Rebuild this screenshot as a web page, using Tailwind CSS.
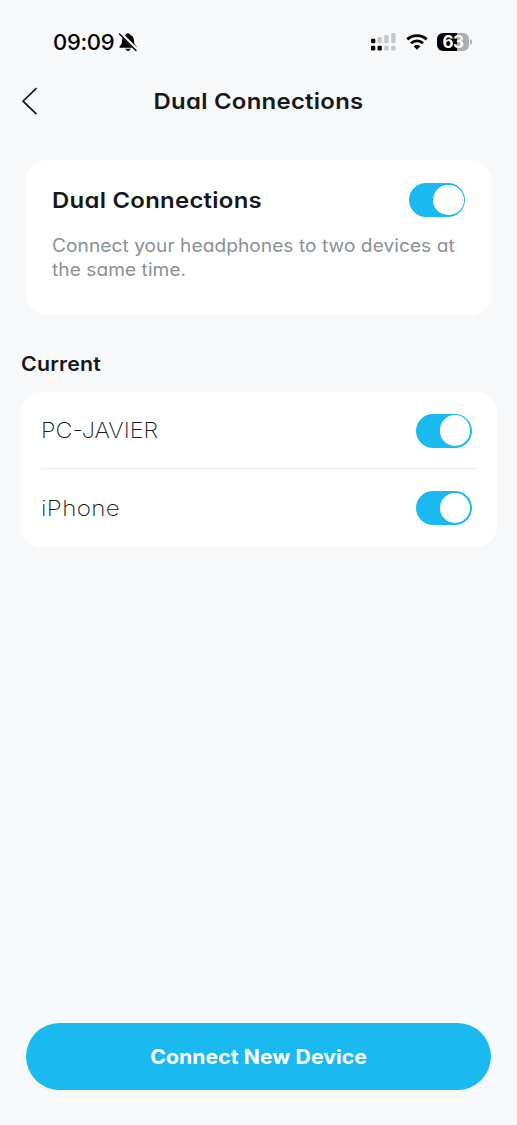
<!DOCTYPE html>
<html lang="en">
<head>
<meta charset="utf-8">
<meta name="viewport" content="width=device-width, initial-scale=1">
<title>Dual Connections</title>
<script src="https://cdn.jsdelivr.net/npm/@tailwindcss/browser@4"></script>
</head>
<body class="bg-[#f7f8fa] font-['Inter','Liberation_Sans',sans-serif] [font-feature-settings:'cv11'] text-[#16181a]">
<div class="flex h-[1125px] w-[517px] flex-col overflow-hidden whitespace-nowrap">

  <div class="flex h-[76px] shrink-0 items-center pt-2 pl-[53px] pr-[45px] text-black">
    <span class="text-[22px] font-medium leading-7 tracking-[-0.3px]">09:09</span>
    <svg class="ml-[4px] h-[20px] w-[20px]" viewBox="0 0 20 20">
      <path d="M10 1.2c-1.3 0-2.1.7-2.3 1.8C5.2 3.9 4 5.900 4 8.500c0 3.500-1.100 4.300-2.300 5.700-.6.8-.2 1.600.7 1.600h15.200c.9 0 1.300-.8.700-1.600C17.100 12.800 16 12 16 8.500c0-2.600-1.200-4.600-3.700-5.500C12.100 1.900 11.300 1.200 10 1.200zM7.500 16.800h5c-.2 1.300-1.200 2.200-2.500 2.200s-2.300-.9-2.500-2.200z"/>
      <path d="M2.200 1.200 19 18" stroke="#f7f8fa" stroke-width="3.600"/>
      <path d="M1.500 2 18 18.500" stroke="#000" stroke-width="1.400" stroke-linecap="round"/>
    </svg>
    <svg class="ml-auto h-[20px] w-[27px]" viewBox="0 0 27 20">
      <g fill="#c6c7c9"><rect x="7.500" y="5" width="4.300" height="6.300" rx="1.200"/><rect x="14.300" y="3" width="4.300" height="8.300" rx="1.200"/><rect x="21.200" y="1" width="4.300" height="10.300" rx="1.200"/><rect x="14.300" y="13.800" width="4.300" height="4.700" rx="1.200"/><rect x="21.200" y="13.800" width="4.300" height="4.700" rx="1.200"/></g>
      <rect x="1" y="6.800" width="4.300" height="4.500" rx="1.200"/><rect x="1" y="13.800" width="4.300" height="4.700" rx="1.200"/><rect x="7.500" y="13.800" width="4.300" height="4.700" rx="1.200"/>
    </svg>
    <svg class="ml-[9px] h-[16px] w-[22px]" viewBox="0 0 22 16" fill="none" stroke="#000" stroke-width="2.900">
      <path d="M1.300 5.400C6.700.4 15.300.4 20.700 5.400"/><path d="M5 9.200c3.400-3.100 8.600-3.100 12 0"/>
      <path fill="#000" stroke="none" d="M11 15.700 7.600 12.300c1.900-1.700 4.900-1.700 6.800 0z"/>
    </svg>
    <div class="ml-[9px] flex items-center">
      <div class="flex h-[18px] w-[32px] items-center justify-center rounded-[6px] bg-linear-to-r from-black from-63% to-[#acadaf] to-63% text-[17px] font-bold leading-none tracking-[-0.5px] text-white">63</div>
      <div class="ml-[1px] h-[6px] w-[2px] rounded-r-full bg-[#b4b5b7]"></div>
    </div>
  </div>

  <div class="grid h-[50px] shrink-0 grid-cols-[60px_1fr_60px] items-center">
    <svg class="ml-[21px] h-[28px] w-[18px]" viewBox="0 0 18 28" fill="none" stroke="#16181a" stroke-width="1.700"><path d="M15.500 1.200 2 14.200l13.500 13"/></svg>
    <h1 class="-mt-px scale-x-[1.087] text-center text-[22px] font-semibold leading-7 tracking-[0.25px]">Dual Connections</h1>
  </div>

  <section class="mx-[26px] mt-[34px] h-[155px] shrink-0 rounded-[21px] bg-white px-[26px] pt-[23px]">
    <div class="flex h-[34px] items-center justify-between">
      <h2 class="origin-left scale-x-[1.087] text-[22px] font-semibold leading-7 tracking-[0.25px]">Dual Connections</h2>
      <div class="flex h-[34px] w-[56px] items-center justify-end rounded-full bg-[#1abaf1] pr-[1.500px]"><div class="h-[30.500px] w-[30.500px] rounded-full bg-white"></div></div>
    </div>
    <p class="mt-[17px] origin-left scale-x-[1.062] text-[18px] leading-[24px] tracking-[0.050px] text-[#8a9195]">Connect your headphones to two devices at<br>the same time.</p>
  </section>

  <h3 class="mt-[35px] ml-[21px] h-[28px] shrink-0 origin-left scale-x-[1.065] text-[20px] font-semibold leading-7 tracking-[0.2px]">Current</h3>

  <section class="ml-[21px] mr-[20.500px] mt-[14px] h-[155px] shrink-0 rounded-[21px] bg-white pl-[20px] pr-[20px]">
    <div class="flex h-[77px] items-center justify-between border-b border-[#eceff2] pr-[5px]">
      <span class="origin-left scale-x-[1.065] text-[22px] font-extralight leading-7">PC-JAVIER</span>
      <div class="mt-px flex h-[34px] w-[56px] items-center justify-end rounded-full bg-[#1abaf1] pr-[1.500px]"><div class="h-[30.500px] w-[30.500px] rounded-full bg-white"></div></div>
    </div>
    <div class="flex h-[78px] items-center justify-between pr-[5px]">
      <span class="origin-left scale-x-[1.1] text-[22px] font-extralight leading-7 tracking-[0.35px]">iPhone</span>
      <div class="flex h-[34px] w-[56px] items-center justify-end rounded-full bg-[#1abaf1] pr-[1.500px]"><div class="h-[30.500px] w-[30.500px] rounded-full bg-white"></div></div>
    </div>
  </section>

  <button class="mx-[26px] mt-auto mb-[35px] h-[67px] shrink-0 rounded-full bg-[#1abaf1] text-[20px] font-bold leading-7 tracking-[0.1px] text-white"><span class="inline-block scale-x-[1.057]">Connect New Device</span></button>
</div>
</body>
</html>
